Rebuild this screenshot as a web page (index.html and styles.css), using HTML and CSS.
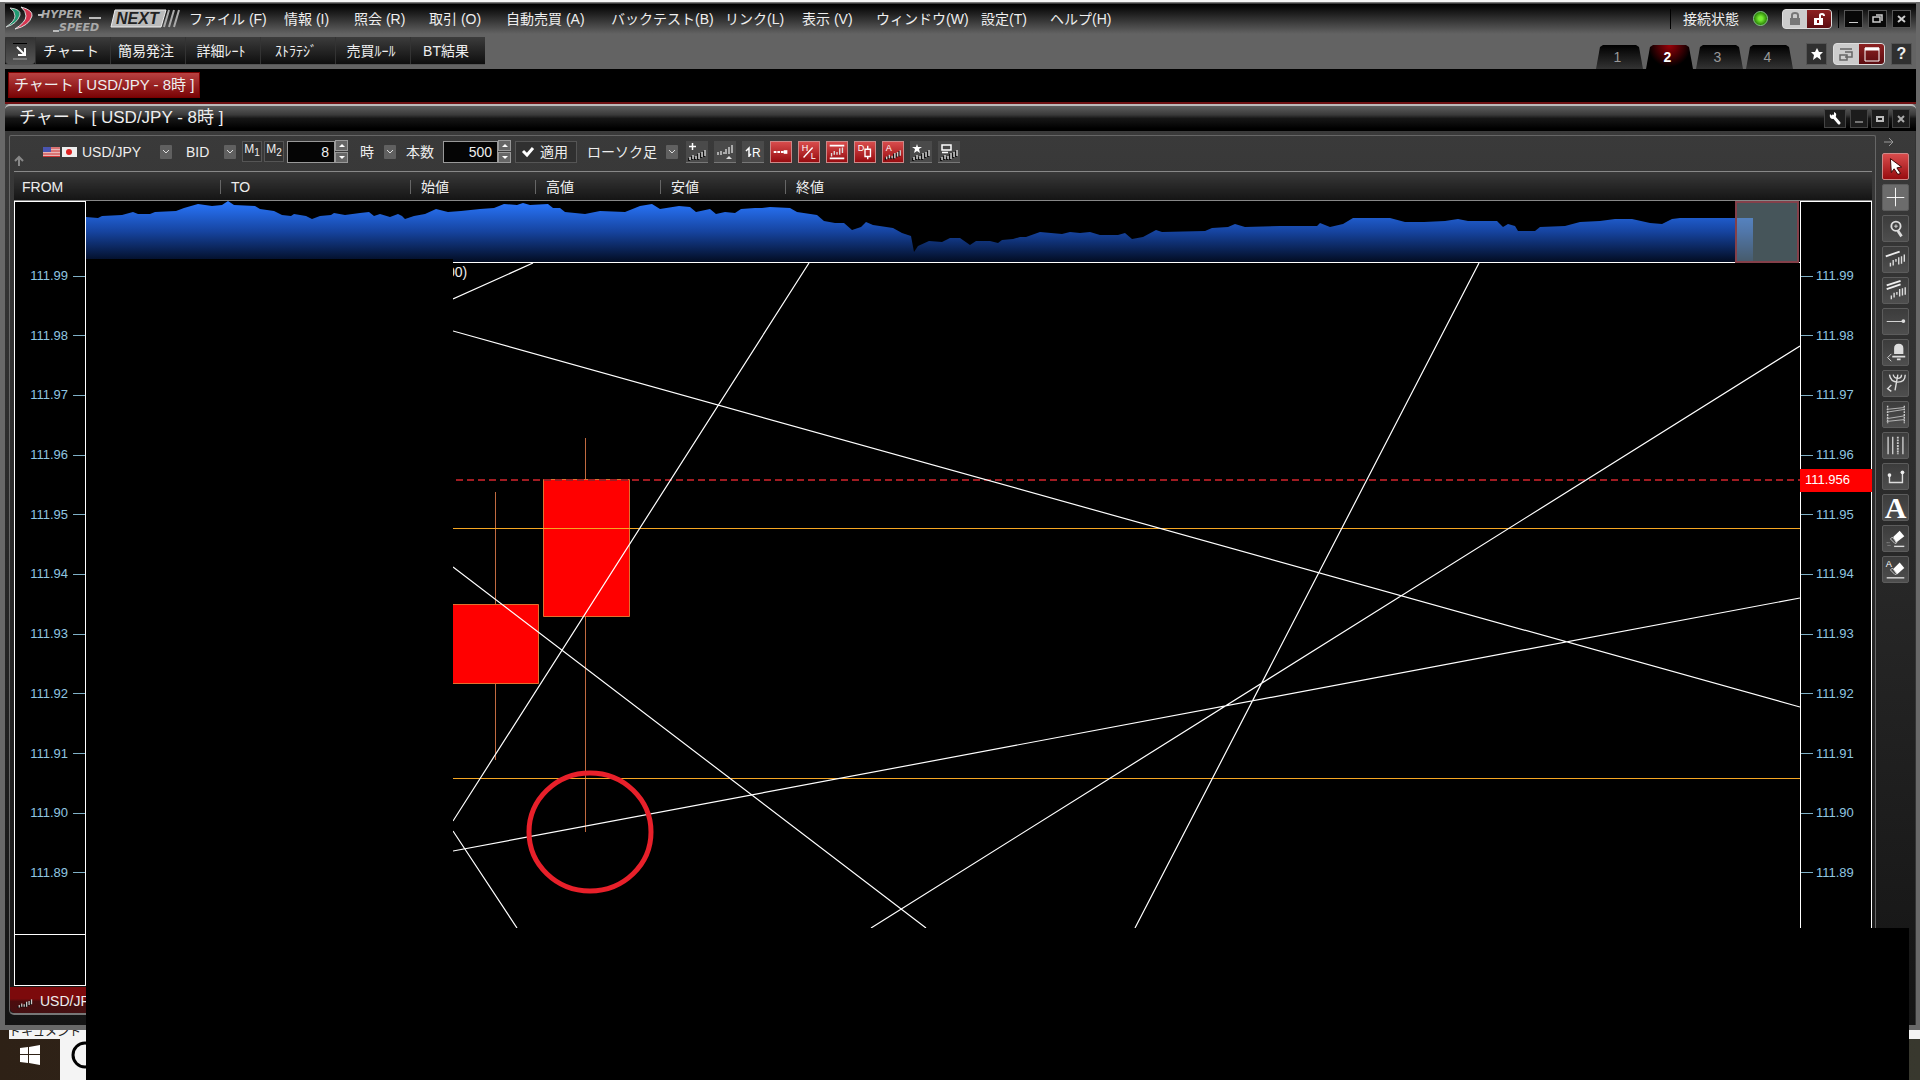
FILE: index.html
```html
<!DOCTYPE html>
<html lang="ja">
<head>
    <meta charset="UTF-8">
    <meta name="viewport" content="width=device-width, initial-scale=1.0">
    <title>HYPER SPEED NEXT</title>
    <link rel="stylesheet" href="styles.css">
</head>
<body>
    <!-- shared icon parts -->
    <svg class="defs">
        <symbol id="bars" viewBox="0 0 22 22">
            <path d="M4 16v3M7 14v4M10 15v3M13 12v6M16 11v5M19 9v6" stroke="#111" stroke-width="2" transform="translate(-1 1)"/>
            <path d="M4 16v3M7 14v4M10 15v3M13 12v6M16 11v5M19 9v6" stroke="#ccc" stroke-width="1.500"/>
        </symbol>
    </svg>

    <div class="app">
        <header class="topbar">
            <div class="top-row">
                <svg class="logo" width="176" height="26" viewBox="0 0 176 26">
                    <path d="M5 2Q16 3 15 9Q12 18 1 21Q10 15 10 10Q10 5 5 2Z" fill="#1f9a72" stroke="#ccc" stroke-width="1"/>
                    <path d="M16 1Q28 4 27 10Q24 20 10 23Q21 16 21 10Q21 5 16 1Z" fill="#d63550" stroke="#ddd" stroke-width="1"/>
                    <text x="36" y="12" class="logo-text">HYPER</text>
                    <text x="54" y="25" class="logo-text">SPEED</text>
                    <path d="M38 9h-5M84 12h12M48 25h6" stroke="#bbb" stroke-width="2"/>
                    <path d="M110 4h51l-5 17h-50z" fill="#bbb" stroke="#eee"/>
                    <text x="111" y="18" class="logo-next">NEXT</text>
                    <path d="M164 4l-5 17M169 4l-5 17M174 4l-5 17" stroke="#aaa" stroke-width="2"/>
                </svg>
                <nav class="menu">
                    <button>ファイル (F)</button>
                    <button>情報 (I)</button>
                    <button>照会 (R)</button>
                    <button>取引 (O)</button>
                    <button>自動売買 (A)</button>
                    <button>バックテスト(B)</button>
                    <button>リンク(L)</button>
                    <button>表示 (V)</button>
                    <button>ウィンドウ(W)</button>
                    <button>設定(T)</button>
                    <button>ヘルプ(H)</button>
                </nav>
                <div class="status">
                    <span>接続状態</span>
                    <i class="led"></i>
                    <div class="toggle lock">
                        <button aria-label="ロック"><svg width="24" height="18" viewBox="0 0 24 18"><path d="M7 8h10v7H7z" fill="#777"/><path d="M9 8V5q0-2 3-2t3 2v3M12 10v3" fill="none" stroke="#777" stroke-width="2"/></svg></button>
                        <button class="on" aria-label="ロック解除"><svg width="24" height="18" viewBox="0 0 24 18"><path d="M7 8h9v7H7z" fill="#fff"/><path d="M13 8V5q0-1 2-1t2 2" fill="none" stroke="#fff" stroke-width="2"/><path d="M11 10v3" stroke="#811" stroke-width="2"/></svg></button>
                    </div>
                    <div class="win-buttons">
                        <button aria-label="最小化"><svg width="17" height="16"><path d="M4 11.500h9" stroke="#ccc"/></svg></button>
                        <button aria-label="元に戻す"><svg width="17" height="16"><path d="M4 6h7v5H4zM7 4h6v6" fill="none" stroke="#ccc" stroke-width="1.500"/></svg></button>
                        <button aria-label="閉じる"><svg width="17" height="16"><path d="M5 5l7 6M12 5l-7 6" stroke="#ccc" stroke-width="2"/></svg></button>
                    </div>
                </div>
            </div>
            <div class="tool-row">
                <div class="quick">
                    <button class="pin" aria-label="固定"><svg width="20" height="20" viewBox="0 0 20 20"><path d="M3 2.500h14" stroke="#000"/><path d="M3 18h14" stroke="#aaa"/><path d="M7 6l7 7M15 7v7H8" fill="none" stroke="#fff" stroke-width="2"/></svg></button>
                    <button>チャート</button>
                    <button>簡易発注</button>
                    <button>詳細ﾚｰﾄ</button>
                    <button>ｽﾄﾗﾃｼﾞ</button>
                    <button>売買ﾙｰﾙ</button>
                    <button>BT結果</button>
                </div>
                <div class="pages">
                    <button>1</button>
                    <button class="current">2</button>
                    <button>3</button>
                    <button>4</button>
                </div>
                <div class="view-buttons">
                    <button class="square" aria-label="お気に入り"><svg width="20" height="20" viewBox="0 0 20 20"><path d="M10 4l2 4h4l-3 3 1 5-4-3-4 3 1-5-3-3h4z" fill="#fff"/></svg></button>
                    <div class="toggle view">
                        <button aria-label="分割"><svg width="25" height="20" viewBox="0 0 25 20"><path d="M6 5h12M11 8h7v5h-7M6 11h7v5H6z" fill="none" stroke="#666" stroke-width="1.500"/></svg></button>
                        <button class="on" aria-label="全画面"><svg width="25" height="20" viewBox="0 0 25 20"><path d="M6 4h14v13H6z" fill="none" stroke="#fff"/><path d="M6 5h14" stroke="#fff" stroke-width="3"/></svg></button>
                    </div>
                    <button class="square help">?</button>
                </div>
            </div>
        </header>

        <div class="docs"><button>チャート [ USD/JPY - 8時 ]</button></div>

        <div class="titlebar">
            <h1>チャート [ USD/JPY - 8時 ]</h1>
            <div class="title-buttons">
                <button class="wrench" aria-label="設定"><svg width="20" height="17" viewBox="0 0 20 17"><path d="M8 6l6 7" stroke="#fff" stroke-width="3" stroke-linecap="round"/><path d="M5 4l2 2 2-1V2q3 1 2 4-1 3-4 3-3-1-2-5z" fill="#fff"/></svg></button>
                <button aria-label="最小化"><svg width="16" height="17"><path d="M4 12h8" stroke="#ccc" stroke-width="1"/></svg></button>
                <button aria-label="最大化"><svg width="16" height="17"><path d="M5 7h6v4H5z" fill="none" stroke="#bbb" stroke-width="2"/></svg></button>
                <button class="close" aria-label="閉じる"><svg width="16" height="17"><path d="M5 6l6 6M11 6l-6 6" stroke="#aaa" stroke-width="2"/></svg></button>
            </div>
        </div>

        <main class="workspace">
            <section class="panel">
                <div class="toolbar">
                    <svg class="up" width="10" height="12"><path d="M5 11V2M1 6l4-4 4 4" fill="none" stroke="#888" stroke-width="2"/></svg>
                    <svg class="flags" width="34" height="10" viewBox="0 0 34 10">
                        <path d="M0 0h17v10H0z" fill="#e8b5b5"/>
                        <path d="M0 1h17M0 4h17M0 7h17M0 9.500h17" stroke="#c33" stroke-width="1"/>
                        <path d="M0 0h8v5H0z" fill="#4a55b0"/>
                        <path d="M19 0h15v10H19z" fill="#eee"/>
                        <circle cx="26" cy="5" r="3" fill="#d22"/>
                    </svg>
                    <select class="pair" aria-label="通貨ペア"><option>USD/JPY</option></select>
                    <select class="side" aria-label="売買"><option>BID</option></select>
                    <button class="m">M<sub>1</sub></button>
                    <button class="m m2">M<sub>2</sub></button>
                    <input class="span" type="text" value="8" aria-label="足の長さ">
                    <span class="spin"><button aria-label="増やす"></button><button class="down" aria-label="減らす"></button></span>
                    <select class="unit" aria-label="単位"><option>時</option></select>
                    <label for="count">本数</label>
                    <input class="count" id="count" type="text" value="500">
                    <span class="spin"><button aria-label="増やす"></button><button class="down" aria-label="減らす"></button></span>
                    <button class="apply"><svg width="14" height="12"><path d="M2 5l4 4 6-7" fill="none" stroke="#fff" stroke-width="3"/></svg>適用</button>
                    <select class="kind" aria-label="チャート種類"><option>ローソク足</option></select>
                    <div class="icons">
                        <button aria-label="追加"><svg viewBox="0 0 22 22"><use href="#bars"/><path d="M3 5.500h7M6.500 2v7" stroke="#fff" stroke-width="1.500"/></svg></button>
                        <button aria-label="編集"><svg viewBox="0 0 22 22"><path d="M4 11v3M7 10v4M10 11v2M12 8v5M15 6v7M18 4v8" stroke="#ccc" stroke-width="1.500"/><path d="M12 18l3-3 3 3z" fill="#ddd"/></svg></button>
                        <button aria-label="1R"><svg viewBox="0 0 22 22"><path d="M4 10l3-3v9M7 15l2-2" fill="none" stroke="#fff" stroke-width="1.500"/><text x="10" y="16" class="glyph">R</text></svg></button>
                        <button class="red" aria-label="現在値"><svg viewBox="0 0 22 22"><path d="M3 11h11" stroke="#fff" stroke-width="2" stroke-dasharray="3 1"/><path d="M14 9h4v4h-4z" fill="#fff"/></svg></button>
                        <button class="red" aria-label="高値安値"><svg viewBox="0 0 22 22"><path d="M5 17L15 6" stroke="#fff" stroke-width="1.500"/><text x="3" y="10" class="glyph small">H</text><text x="13" y="19" class="glyph small">L</text></svg></button>
                        <button class="red" aria-label="範囲"><svg viewBox="0 0 22 22"><path d="M3 4h16M3 18h16" stroke="#fff" stroke-width="2"/><path d="M5 12v4M8 10v4M11 11v3M14 7v7M17 6v6" stroke="#ddd" stroke-width="1.500"/></svg></button>
                        <button class="red" aria-label="データ"><svg viewBox="0 0 22 22"><text x="3" y="10" class="glyph small">D</text><path d="M11 8h6v8h-6zM14 4v4M14 16v3" fill="none" stroke="#fff" stroke-width="1.500"/></svg></button>
                        <button class="red" aria-label="アラート"><svg viewBox="0 0 22 22"><use href="#bars"/><text x="3" y="10" class="glyph small">A</text></svg></button>
                        <button aria-label="お気に入り"><svg viewBox="0 0 22 22"><use href="#bars"/><path d="M7 3l1 3h4l-3 2 1 4-3-2-3 2 1-4-3-2h4z" fill="#fff"/></svg></button>
                        <button aria-label="画面"><svg viewBox="0 0 22 22"><use href="#bars"/><path d="M4 4h9v5H4zM4 11.500h6" fill="none" stroke="#fff" stroke-width="1.500"/></svg></button>
                    </div>
                </div>

                <table class="quotes">
                    <tr><th class="from">FROM</th><th class="to">TO</th><th class="price">始値</th><th class="price">高値</th><th class="price">安値</th><th>終値</th></tr>
                </table>

                <div class="chart">
                    <div class="axis left">
                        <ul>
                            <li>111.99</li><li>111.98</li><li>111.97</li><li>111.96</li><li>111.95</li><li>111.94</li><li>111.93</li><li>111.92</li><li>111.91</li><li>111.90</li><li>111.89</li>
                        </ul>
                        <div class="axis-foot"></div>
                    </div>
                    <svg class="plot" viewBox="86 201 1714 785" preserveAspectRatio="none">
                        <defs>
                            <linearGradient id="sea" gradientUnits="userSpaceOnUse" x1="0" y1="201" x2="0" y2="262">
                                <stop offset="0" stop-color="#2a78ff"/>
                                <stop offset=".5" stop-color="#1644a0"/>
                                <stop offset="1" stop-color="#020c22"/>
                            </linearGradient>
                            <clipPath id="area"><path d="M453 263h1347v665H453z"/></clipPath>
                        </defs>
                        <!-- overview -->
                        <path fill="url(#sea)" d="M86 262V217L98 218L102 216L122 215L133 212L138 214L150 214L155 212L176 211L184 208L198 204L212 206L222 205L228 201L234 205L255 206L260 209L274 211L282 215L291 216L294 214L306 216L312 219L320 216L331 215L334 213L345 215L360 213L369 212L374 216L380 214L390 217L398 214L402 216L405 219L414 216L425 214L436 209L448 212L461 211L480 209L494 208L504 204L517 205L523 203L530 205L548 204L553 208L560 208L565 212L585 214L600 211L625 212L640 206L652 204L660 209L679 206L690 207L696 212L710 209L716 214L725 212L735 213L741 209L755 208L762 208L770 207L790 208L797 212L817 215L824 221L835 223L844 223L852 230L861 227L866 222L873 225L893 228L902 233L911 236L914 252L918 246L929 241L942 242L950 238L960 238L970 245L976 241L990 241L998 243L1002 240L1013 239L1020 237L1026 237L1040 232L1062 234L1070 232L1080 233L1090 232L1100 235L1118 235L1125 233L1132 239L1143 237L1156 230L1162 232L1205 231L1212 228L1228 227L1235 224L1245 227L1280 226L1300 226L1317 226L1320 223L1330 227L1343 224L1353 218L1390 218L1405 222L1424 222L1445 221L1458 219L1468 221L1497 221L1503 227L1508 224L1515 226L1518 231L1535 231L1540 227L1565 226L1580 222L1600 221L1615 219L1632 219L1650 223L1662 224L1672 219L1680 218H1753V262Z"/>
                        <path d="M86 259h367v5H86z" fill="#000"/>
                        <path d="M453 262.500h1347" stroke="#fff"/>
                        <path d="M1736 202h62v60h-62z" fill="#8caab4" fill-opacity=".5" stroke="#84404a" stroke-width="2"/>
                        <!-- candles and lines -->
                        <g clip-path="url(#area)" fill="none">
                            <path d="M495.500 492V760M585.500 438V832" stroke="#c06a40"/>
                            <path d="M440 604.500h98.500v79H440zM543.500 479.500h86v137h-86z" fill="#f00" stroke="#e07030"/>
                            <path d="M456 480H1800" stroke="#a01c22" stroke-width="2" stroke-dasharray="7 4"/>
                            <path d="M453 528.500H1800M453 778.500H1800" stroke="#f5a623"/>
                            <path d="M453 299L533 263M453 331L1800 707M453 567L926 928M453 821L809 263M453 831L517 928M453 851L1800 598M871 928L1800 346M1135 928L1479 263" stroke="#fff" stroke-width="1.200"/>
                            <ellipse cx="590" cy="832" rx="61" ry="59" stroke="#e8202a" stroke-width="5"/>
                            <text x="447" y="277" class="plot-text">00)</text>
                        </g>
                    </svg>
                    <div class="axis right">
                        <ul>
                            <li>111.99</li><li>111.98</li><li>111.97</li><li>111.96</li><li>111.95</li><li>111.94</li><li>111.93</li><li>111.92</li><li>111.91</li><li>111.90</li><li>111.89</li>
                        </ul>
                        <div class="axis-foot"></div>
                        <span class="last">111.956</span>
                    </div>
                </div>

                <div class="sheet"><svg width="18" height="18"><use href="#bars"/></svg>USD/JPY</div>
            </section>

            <aside class="tools">
                <svg class="fold" width="12" height="10"><path d="M1 5h9M6 1l4 4-4 4" fill="none" stroke="#999" stroke-width="1"/></svg>
                <button class="red" aria-label="選択"><svg viewBox="0 0 27 27"><path d="M8 5l12 9-5 1 4 6-3 1-4-6-3 4z" fill="#fff" stroke="#300"/></svg></button>
                <button class="lit" aria-label="十字"><svg viewBox="0 0 27 27"><path d="M4 13.500h19M13.500 3v20" stroke="#fff"/></svg></button>
                <button aria-label="拡大"><svg viewBox="0 0 27 27"><circle cx="14" cy="11" r="5" fill="none" stroke="#ddd" stroke-width="2"/><path d="M12 11h4M14 9v4" stroke="#ddd"/><path d="M16 16l4 6" stroke="#ddd" stroke-width="3"/></svg></button>
                <button aria-label="トレンドライン"><svg viewBox="0 0 27 27"><path d="M3 10l15-5" stroke="#eee" stroke-width="2"/><path d="M8 17v4M11 14v6M14 13v3M17 11v8M20 10v8M23 8v8" stroke="#ddd" stroke-width="1.500"/></svg></button>
                <button aria-label="平行線"><svg viewBox="0 0 27 27"><path d="M4 8l15-5M4 12l15-5" stroke="#eee" stroke-width="2"/><path d="M9 19v4M12 16v5M15 15v3M18 12v8M21 11v8M24 10v8" stroke="#ddd" stroke-width="1.500"/></svg></button>
                <button aria-label="水平線"><svg viewBox="0 0 27 27"><path d="M4 13.500h19" stroke="#ddd"/><circle cx="22" cy="13" r="2" fill="#ddd"/></svg></button>
                <button aria-label="アラート"><svg viewBox="0 0 27 27"><path d="M12 15V9q0-5 5-5t5 5v6zM10 17h14v2H10zM15 20h4v2h-4z" fill="#ddd"/><path d="M9 15l-4 4 4 4" fill="none" stroke="#ddd"/></svg></button>
                <button aria-label="ファン"><svg viewBox="0 0 27 27"><path d="M13 21l3-17M7 4q1 8 9 8t8-8M11 4q1 4 5 4t4-4M9 15l-4 4 4 3" fill="none" stroke="#ddd" stroke-width="1.500"/></svg></button>
                <button aria-label="チャネル"><svg viewBox="0 0 27 27"><path d="M5 4v19M23 4v19" stroke="#ccc" stroke-width="1.500" stroke-dasharray="2 1"/><path d="M4 11l19-3M4 18l19-3M4 8l19-2M4 21l19-2" stroke="#bbb"/></svg></button>
                <button aria-label="時間帯"><svg viewBox="0 0 27 27"><path d="M5.500 4v19M10.500 4v19M21.500 4v19" stroke="#ccc" stroke-width="1.500"/><path d="M16 4v19" stroke="#ccc" stroke-width="2" stroke-dasharray="2 1"/></svg></button>
                <button aria-label="期間"><svg viewBox="0 0 27 27"><path d="M7 12v8h14V9" fill="none" stroke="#ddd" stroke-width="1.500"/><circle cx="7" cy="12" r="2" fill="#eee"/><circle cx="21" cy="9" r="2" fill="#eee"/></svg></button>
                <button class="letter">A</button>
                <button aria-label="消去"><svg viewBox="0 0 27 27"><path d="M11 12l7-7 5 6-9 7z" fill="#fff"/><path d="M8 14l5 5 2-1-5-6z" fill="none" stroke="#ccc"/><path d="M12 22h11" stroke="#ddd" stroke-width="1.500"/><path d="M4 18h4M5 21h4" stroke="#aaa" stroke-dasharray="1 1"/></svg></button>
                <button aria-label="全消去"><svg viewBox="0 0 27 27"><path d="M11 13l7-7 5 6-8 7z" fill="#fff"/><path d="M8 14l5 5 2-1-5-6z" fill="none" stroke="#ccc"/><path d="M4 22.500h19" stroke="#ddd" stroke-width="1.500"/><text x="3" y="11" class="glyph small">A</text></svg></button>
            </aside>
        </main>
    </div>

    <div class="behind">ドキュメント</div>
    <footer class="taskbar">
        <button class="start" aria-label="スタート"><svg width="20" height="20" viewBox="0 0 20 20"><path d="M0 3l8-1v7H0zM9 2l11-2v9H9zM0 10h8v8l-8-1zM9 10h11v10L9 18z" fill="#fff"/></svg></button>
        <button class="search" aria-label="検索"><svg width="28" height="28" viewBox="0 0 28 28"><circle cx="14" cy="14" r="12" fill="none" stroke="#000" stroke-width="3"/></svg></button>
    </footer>
    <div class="cover"></div>
</body>
</html>
```

FILE: styles.css
```css
* {
    box-sizing: border-box;
}
body {
    margin: 0;
    height: 100vh;
    display: flex;
    flex-direction: column;
    position: relative;
    overflow: hidden;
    background: #2e2116;
    color: #eee;
    font: 14px/20px "Liberation Sans", "Noto Sans CJK JP", sans-serif;
}
button, input, select {
    font: inherit;
    color: inherit;
    border: 0;
    padding: 0;
    margin: 0;
    background: none;
    white-space: nowrap;
}
svg {
    display: block;
}
.defs {
    position: absolute;
    width: 0;
    height: 0;
}
.app {
    flex: 1;
    min-height: 0;
    display: flex;
    flex-direction: column;
    padding: 0 4px 5px 5px;
    background: #686868;
    border-top: 2px solid #f4f4f4;
}

/* top bar */
.topbar {
    height: 67px;
    background: linear-gradient(#777 0, #777 1px, #000 2px, #0c0c0c 6px, #636363 32px);
}
.top-row {
    display: flex;
    align-items: center;
    height: 33px;
}
.logo {
    flex: none;
}
.logo-text {
    font: italic bold 11px "DejaVu Sans", sans-serif;
    fill: #aaa;
}
.logo-next {
    font-size: 16px;
    font-style: italic;
    font-weight: bold;
    fill: #222;
}
.menu {
    display: grid;
    grid-template-columns: 95px 70px 75px 77px 105px 114px 77px 74px 105px 69px 70px;
    margin-left: 8px;
}
.menu button {
    text-align: left;
}
.status {
    display: flex;
    align-items: center;
    height: 20px;
    margin-left: auto;
    padding-left: 12px;
    border-left: 1px solid #000;
}
.status span {
    width: 58px;
}
.led {
    width: 15px;
    height: 15px;
    margin: 0 8px 0 12px;
    border-radius: 50%;
    border: 1px solid #8c8;
    background: radial-gradient(#7e3 20%, #270 75%);
}
.toggle {
    display: flex;
    border-radius: 4px;
    overflow: hidden;
    background: #ccc;
    border: 1px solid #ddd;
}
.toggle .on {
    background: linear-gradient(#8c2222, #5c0c10);
}
.lock {
    margin: 0 6px;
}
.win-buttons {
    display: flex;
    gap: 5px;
    padding-left: 5px;
    margin-right: 5px;
    border-left: 1px solid #000;
}
.win-buttons button {
    background: #080808;
    border: 1px solid #555;
}
.tool-row {
    display: flex;
    height: 34px;
}
.quick {
    display: flex;
    height: 28px;
    margin-top: 2px;
    background: linear-gradient(#3c3c3c, #0e0e0e);
    border-bottom: 1px solid #555;
}
.quick button {
    width: 75px;
    padding-right: 4px;
    border-left: 1px solid #333;
}
.quick .pin {
    width: 30px;
    padding: 0 0 0 4px;
    background: linear-gradient(#333, #555);
    border-radius: 3px;
}
.pages {
    display: flex;
    align-items: flex-end;
    gap: 3px;
    margin-left: auto;
    margin-right: 13px;
}
.pages button {
    width: 47px;
    height: 24px;
    padding-right: 4px;
    color: #999;
    background: linear-gradient(#000, #333);
    clip-path: polygon(4px 2px, 7px 0, 40px 0, 43px 2px, 100% 100%, 0 100%);
}
.pages .current {
    color: #fff;
    font-weight: bold;
    background: radial-gradient(at 50% 0, #9c0008, #000 65%);
}
.view-buttons {
    display: flex;
    align-items: flex-start;
    gap: 6px;
    padding-top: 8px;
    margin-right: 4px;
}
.square {
    width: 21px;
    height: 22px;
    background: #303030;
    border: 1px solid #555;
}
.help {
    font-size: 16px;
    font-weight: bold;
}

/* document tabs and window title */
.docs {
    height: 35px;
    padding: 3px;
    background: #000;
    border-bottom: 2px solid #701214;
}
.docs button {
    width: 192px;
    height: 26px;
    text-align: left;
    padding-left: 5px;
    font-size: 15px;
    background: linear-gradient(#b84040, #7a0406);
    border: 1px solid #700;
}
.titlebar {
    display: flex;
    align-items: center;
    height: 27px;
    padding-bottom: 1px;
    border-top: 2px solid #bbb;
    border-radius: 5px 5px 0 0;
    background: linear-gradient(#5e5e5e, #3a3a3a 35%, #161616 50%, #000 90%);
}
.titlebar h1 {
    margin: 0;
    padding-left: 14px;
    font-size: 17px;
    font-weight: normal;
}
.title-buttons {
    display: flex;
    gap: 3px;
    margin-left: auto;
    margin-right: 6px;
}
.title-buttons button {
    height: 19px;
    border: 1px solid #444;
    background: #1c1c1c;
}
.title-buttons .wrench {
    margin-right: 1px;
}

/* workspace */
.workspace {
    flex: 1;
    min-height: 0;
    display: flex;
    background: linear-gradient(#3a3a3a, #141414);
}
.panel {
    flex: 1;
    min-width: 0;
    align-self: flex-start;
    margin: 4px 0 0 4px;
    padding: 0 3px 0 4px;
    border: 1px solid #666;
    border-bottom: 2px solid #777;
    border-radius: 2px 2px 5px 5px;
}
.toolbar {
    display: flex;
    align-items: center;
    height: 35px;
    padding-bottom: 4px;
}
.up {
    align-self: flex-end;
}
.flags {
    margin: 0 5px 0 19px;
}
select {
    appearance: none;
    height: 22px;
    background: url("data:image/svg+xml,%3Csvg xmlns='http://www.w3.org/2000/svg' width='12' height='14'%3E%3Crect width='12' height='14' rx='1' fill='%23606060'/%3E%3Cpath d='M3 5l3 3 3-3' fill='none' stroke='%23ddd'/%3E%3C/svg%3E") no-repeat right center;
}
.pair {
    width: 90px;
}
.side {
    width: 50px;
    margin: 0 6px 0 14px;
}
.m {
    width: 20px;
    height: 21px;
    font-size: 12px;
    line-height: 14px;
    background: #303030;
    border: 1px solid #555;
}
.m sub {
    font-size: 10px;
}
.m2 {
    margin: 0 3px 0 2px;
}
input {
    height: 22px;
    min-width: 0;
    padding-right: 5px;
    text-align: right;
    background: #050505;
    border: 1px solid #999;
}
.span {
    width: 48px;
}
.count {
    width: 55px;
    margin-left: 7px;
}
.spin {
    display: flex;
    flex-direction: column;
    gap: 1px;
    width: 13px;
}
.spin button {
    height: 11px;
    background: #666;
    border: 1px solid #999;
}
.spin button::before {
    content: "";
    display: block;
    width: 0;
    margin: 0 auto;
    border: 3px solid transparent;
    border-top-width: 0;
    border-bottom-color: #fff;
}
.spin .down::before {
    border-width: 3px 3px 0 3px;
    border-top-color: #fff;
}
.unit {
    width: 36px;
    margin: 0 10px 0 12px;
}
.toolbar label {
    width: 30px;
}
.apply {
    display: flex;
    align-items: center;
    gap: 5px;
    width: 62px;
    height: 22px;
    margin: 0 10px 0 4px;
    padding-left: 5px;
    background: #303030;
    border: 1px solid #555;
}
.kind {
    width: 91px;
}
.icons {
    display: flex;
    gap: 6px;
    margin-left: 8px;
}
.icons button {
    width: 22px;
    height: 22px;
    background: #4a4a4a;
    border-bottom: 1px solid #777;
}
.icons .red, .tools .red {
    background: linear-gradient(#d84c4c, #980c10);
    border: 1px solid #c88;
}
.glyph {
    font-size: 12px;
    fill: #fff;
}
.small {
    font-size: 10px;
}
.quotes {
    width: 100%;
    height: 30px;
    table-layout: fixed;
    border-collapse: collapse;
    border-top: 1px solid #888;
    border-bottom: 1px solid #888;
    background: linear-gradient(#3a3a3a, #141414);
}
.quotes th {
    padding: 1px 0 0 8px;
    text-align: left;
    font-weight: normal;
}
.quotes th + th::before {
    content: "";
    display: inline-block;
    height: 14px;
    margin: 0 10px 0 -8px;
    border-left: 1px solid #666;
    vertical-align: -2px;
}
.from {
    width: 206px;
}
.to {
    width: 190px;
}
.price {
    width: 125px;
}

/* chart */
.chart {
    display: flex;
    height: 785px;
    background: #000;
}
.plot {
    flex: 1;
    min-width: 0;
    height: 785px;
}
.plot-text {
    font-size: 14px;
    fill: #eee;
}
.axis {
    display: flex;
    flex-direction: column;
    flex: none;
    width: 72px;
    border: 1px solid #fff;
    position: relative;
    color: #8fc6e0;
    font-size: 13px;
    line-height: 16px;
}
.axis ul {
    flex: 1;
    display: flex;
    flex-direction: column;
    justify-content: space-between;
    margin: 0;
    padding: 66px 0 53px 0;
    list-style: none;
}
.axis li {
    display: flex;
    align-items: center;
    gap: 3px;
}
.left li {
    justify-content: flex-end;
    gap: 5px;
}
.axis li::before {
    content: "";
    width: 12px;
    border-top: 1px solid #7fb0c6;
}
.left li::before {
    order: 2;
}
.axis-foot {
    height: 51px;
    border-top: 1px solid #fff;
}
.last {
    position: absolute;
    top: 267px;
    left: -1px;
    right: -1px;
    padding: 3px 5px 4px;
    background: #f00;
    color: #fff;
}
.sheet {
    display: flex;
    align-items: center;
    gap: 6px;
    height: 26px;
    margin: 1px -3px 0 -4px;
    padding: 2px 0 0 6px;
    background: linear-gradient(#7c0a0c 45%, #4c0c0e 55%, #441012);
    border-radius: 0 0 5px 5px;
}

/* drawing tools */
.tools {
    display: flex;
    flex-direction: column;
    gap: 4px;
    padding: 6px 6px 0 6px;
    border-right: 1px solid #333;
}
.fold {
    margin: 0 0 2px 1px;
}
.tools button {
    width: 27px;
    height: 27px;
    background: linear-gradient(#3c3c3c, #4e4e4e);
    border: 1px solid #5c5c5c;
    border-radius: 2px;
}
.tools .lit {
    background: #6c6c6c;
}
.tools .letter {
    color: #fff;
    font: bold 30px/24px "Liberation Serif", serif;
}

/* desktop below the window */
.behind {
    flex: none;
    height: 9px;
    margin-left: 9px;
    overflow: hidden;
    background: #f4f4f4;
    color: #222;
    font-size: 12px;
    line-height: 4px;
}
.taskbar {
    flex: none;
    display: flex;
    height: 41px;
    background: linear-gradient(90deg, #2e2116, #38382e);
}
.start {
    width: 60px;
    padding: 0 20px 9px;
}
.search {
    width: 280px;
    padding: 0 0 9px 11px;
    background: #f4f4f4;
}
.cover {
    position: absolute;
    top: 928px;
    left: 86px;
    right: 11px;
    bottom: 0;
    background: #000;
}
```
